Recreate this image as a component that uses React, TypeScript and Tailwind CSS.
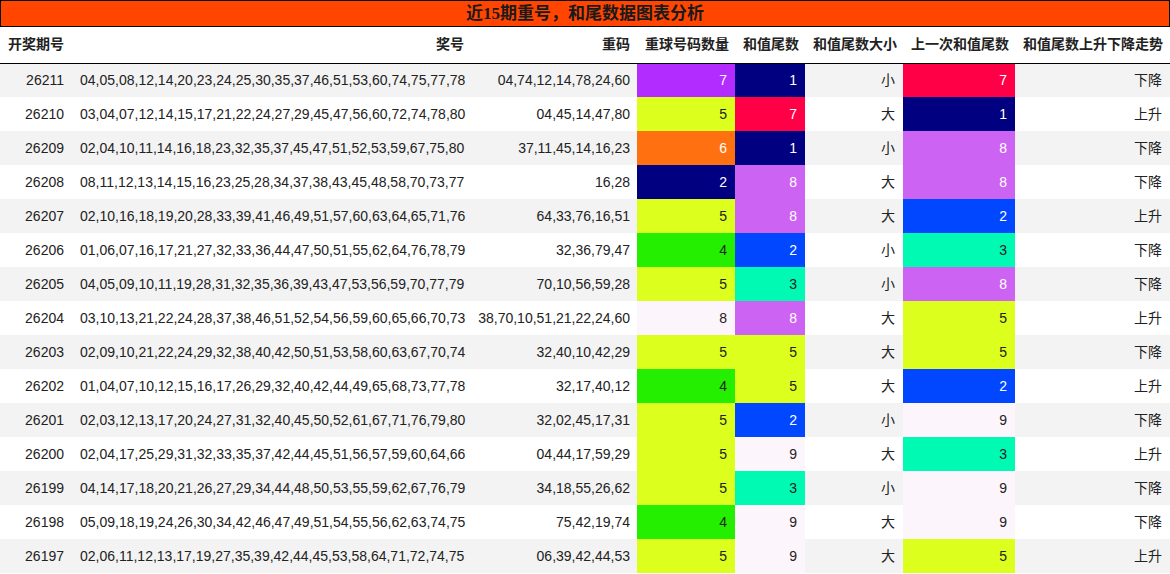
type Row = {
  issue: string;
  nums: string;
  repeat: string;
  count: string;
  tail: string;
  size: string;
  prev: string;
  trend: string;
};

const rows: Row[] = [
  { issue: "26211", nums: "04,05,08,12,14,20,23,24,25,30,35,37,46,51,53,60,74,75,77,78", repeat: "04,74,12,14,78,24,60", count: "7", tail: "1", size: "小", prev: "7", trend: "下降" },
  { issue: "26210", nums: "03,04,07,12,14,15,17,21,22,24,27,29,45,47,56,60,72,74,78,80", repeat: "04,45,14,47,80", count: "5", tail: "7", size: "大", prev: "1", trend: "上升" },
  { issue: "26209", nums: "02,04,10,11,14,16,18,23,32,35,37,45,47,51,52,53,59,67,75,80", repeat: "37,11,45,14,16,23", count: "6", tail: "1", size: "小", prev: "8", trend: "下降" },
  { issue: "26208", nums: "08,11,12,13,14,15,16,23,25,28,34,37,38,43,45,48,58,70,73,77", repeat: "16,28", count: "2", tail: "8", size: "大", prev: "8", trend: "下降" },
  { issue: "26207", nums: "02,10,16,18,19,20,28,33,39,41,46,49,51,57,60,63,64,65,71,76", repeat: "64,33,76,16,51", count: "5", tail: "8", size: "大", prev: "2", trend: "上升" },
  { issue: "26206", nums: "01,06,07,16,17,21,27,32,33,36,44,47,50,51,55,62,64,76,78,79", repeat: "32,36,79,47", count: "4", tail: "2", size: "小", prev: "3", trend: "下降" },
  { issue: "26205", nums: "04,05,09,10,11,19,28,31,32,35,36,39,43,47,53,56,59,70,77,79", repeat: "70,10,56,59,28", count: "5", tail: "3", size: "小", prev: "8", trend: "下降" },
  { issue: "26204", nums: "03,10,13,21,22,24,28,37,38,46,51,52,54,56,59,60,65,66,70,73", repeat: "38,70,10,51,21,22,24,60", count: "8", tail: "8", size: "大", prev: "5", trend: "上升" },
  { issue: "26203", nums: "02,09,10,21,22,24,29,32,38,40,42,50,51,53,58,60,63,67,70,74", repeat: "32,40,10,42,29", count: "5", tail: "5", size: "大", prev: "5", trend: "下降" },
  { issue: "26202", nums: "01,04,07,10,12,15,16,17,26,29,32,40,42,44,49,65,68,73,77,78", repeat: "32,17,40,12", count: "4", tail: "5", size: "大", prev: "2", trend: "上升" },
  { issue: "26201", nums: "02,03,12,13,17,20,24,27,31,32,40,45,50,52,61,67,71,76,79,80", repeat: "32,02,45,17,31", count: "5", tail: "2", size: "小", prev: "9", trend: "下降" },
  { issue: "26200", nums: "02,04,17,25,29,31,32,33,35,37,42,44,45,51,56,57,59,60,64,66", repeat: "04,44,17,59,29", count: "5", tail: "9", size: "大", prev: "3", trend: "上升" },
  { issue: "26199", nums: "04,14,17,18,20,21,26,27,29,34,44,48,50,53,55,59,62,67,76,79", repeat: "34,18,55,26,62", count: "5", tail: "3", size: "小", prev: "9", trend: "下降" },
  { issue: "26198", nums: "05,09,18,19,24,26,30,34,42,46,47,49,51,54,55,56,62,63,74,75", repeat: "75,42,19,74", count: "4", tail: "9", size: "大", prev: "9", trend: "下降" },
  { issue: "26197", nums: "02,06,11,12,13,17,19,27,35,39,42,44,45,53,58,64,71,72,74,75", repeat: "06,39,42,44,53", count: "5", tail: "9", size: "大", prev: "5", trend: "上升" },
];

// 重球号码数量 colour scale
const countColor: Record<string, string> = {
  "2": "bg-[#000080] text-white",
  "4": "bg-[#25ef00] text-[#222]",
  "5": "bg-[#dcff1e] text-[#222]",
  "6": "bg-[#ff7010] text-white",
  "7": "bg-[#b22cff] text-white",
  "8": "bg-[#fdf5fc] text-[#222]",
};

// 和值尾数 colour scale
const tailColor: Record<string, string> = {
  "1": "bg-[#000080] text-white",
  "2": "bg-[#0047ff] text-white",
  "3": "bg-[#00fab4] text-[#222]",
  "5": "bg-[#dcff1e] text-[#222]",
  "7": "bg-[#ff0046] text-white",
  "8": "bg-[#cd63f2] text-white",
  "9": "bg-[#fdf5fc] text-[#222]",
};

const headers = ["开奖期号", "奖号", "重码", "重球号码数量", "和值尾数", "和值尾数大小", "上一次和值尾数", "和值尾数上升下降走势"];

export default function App() {
  return (
    <div className="w-[1170px] bg-white text-[#222] font-['Liberation_Sans','Noto_Sans_CJK_SC',sans-serif]">
      <div className="h-[27px] border border-black bg-[#ff4500] flex items-center justify-center text-[17px] font-bold text-[#1a1a1a] font-['Liberation_Serif','Noto_Sans_CJK_SC',serif]">
        近15期重号，和尾数据图表分析
      </div>
      <table className="w-[1170px] table-fixed border-collapse text-[14px]">
        <colgroup>
          <col className="w-[72px]" />
          <col className="w-[400px]" />
          <col className="w-[165px]" />
          <col className="w-[98px]" />
          <col className="w-[70px]" />
          <col className="w-[98px]" />
          <col className="w-[112px]" />
          <col className="w-[155px]" />
        </colgroup>
        <thead>
          <tr className="h-[36px] border-b border-black">
            {headers.map((h, i) => (
              <th
                key={h}
                className={`px-2 font-bold whitespace-nowrap ${i === 0 ? "text-left" : "text-right"} ${i === 2 ? "pr-[7px]" : ""}`}
              >
                {h}
              </th>
            ))}
          </tr>
        </thead>
        <tbody>
          {rows.map((r, i) => (
            <tr key={r.issue} className={`h-[34px] ${i % 2 === 0 ? "bg-[#f3f3f3]" : "bg-white"}`}>
              <td className="px-2 text-right">{r.issue}</td>
              <td className="px-2 text-right whitespace-nowrap">{r.nums}</td>
              <td className="pl-1 pr-[7px] text-right whitespace-nowrap">{r.repeat}</td>
              <td className={`px-2 text-right ${countColor[r.count]}`}>{r.count}</td>
              <td className={`px-2 text-right ${tailColor[r.tail]}`}>{r.tail}</td>
              <td className="px-2 text-right">{r.size}</td>
              <td className={`px-2 text-right ${tailColor[r.prev]}`}>{r.prev}</td>
              <td className="px-2 text-right">{r.trend}</td>
            </tr>
          ))}
        </tbody>
      </table>
    </div>
  );
}
